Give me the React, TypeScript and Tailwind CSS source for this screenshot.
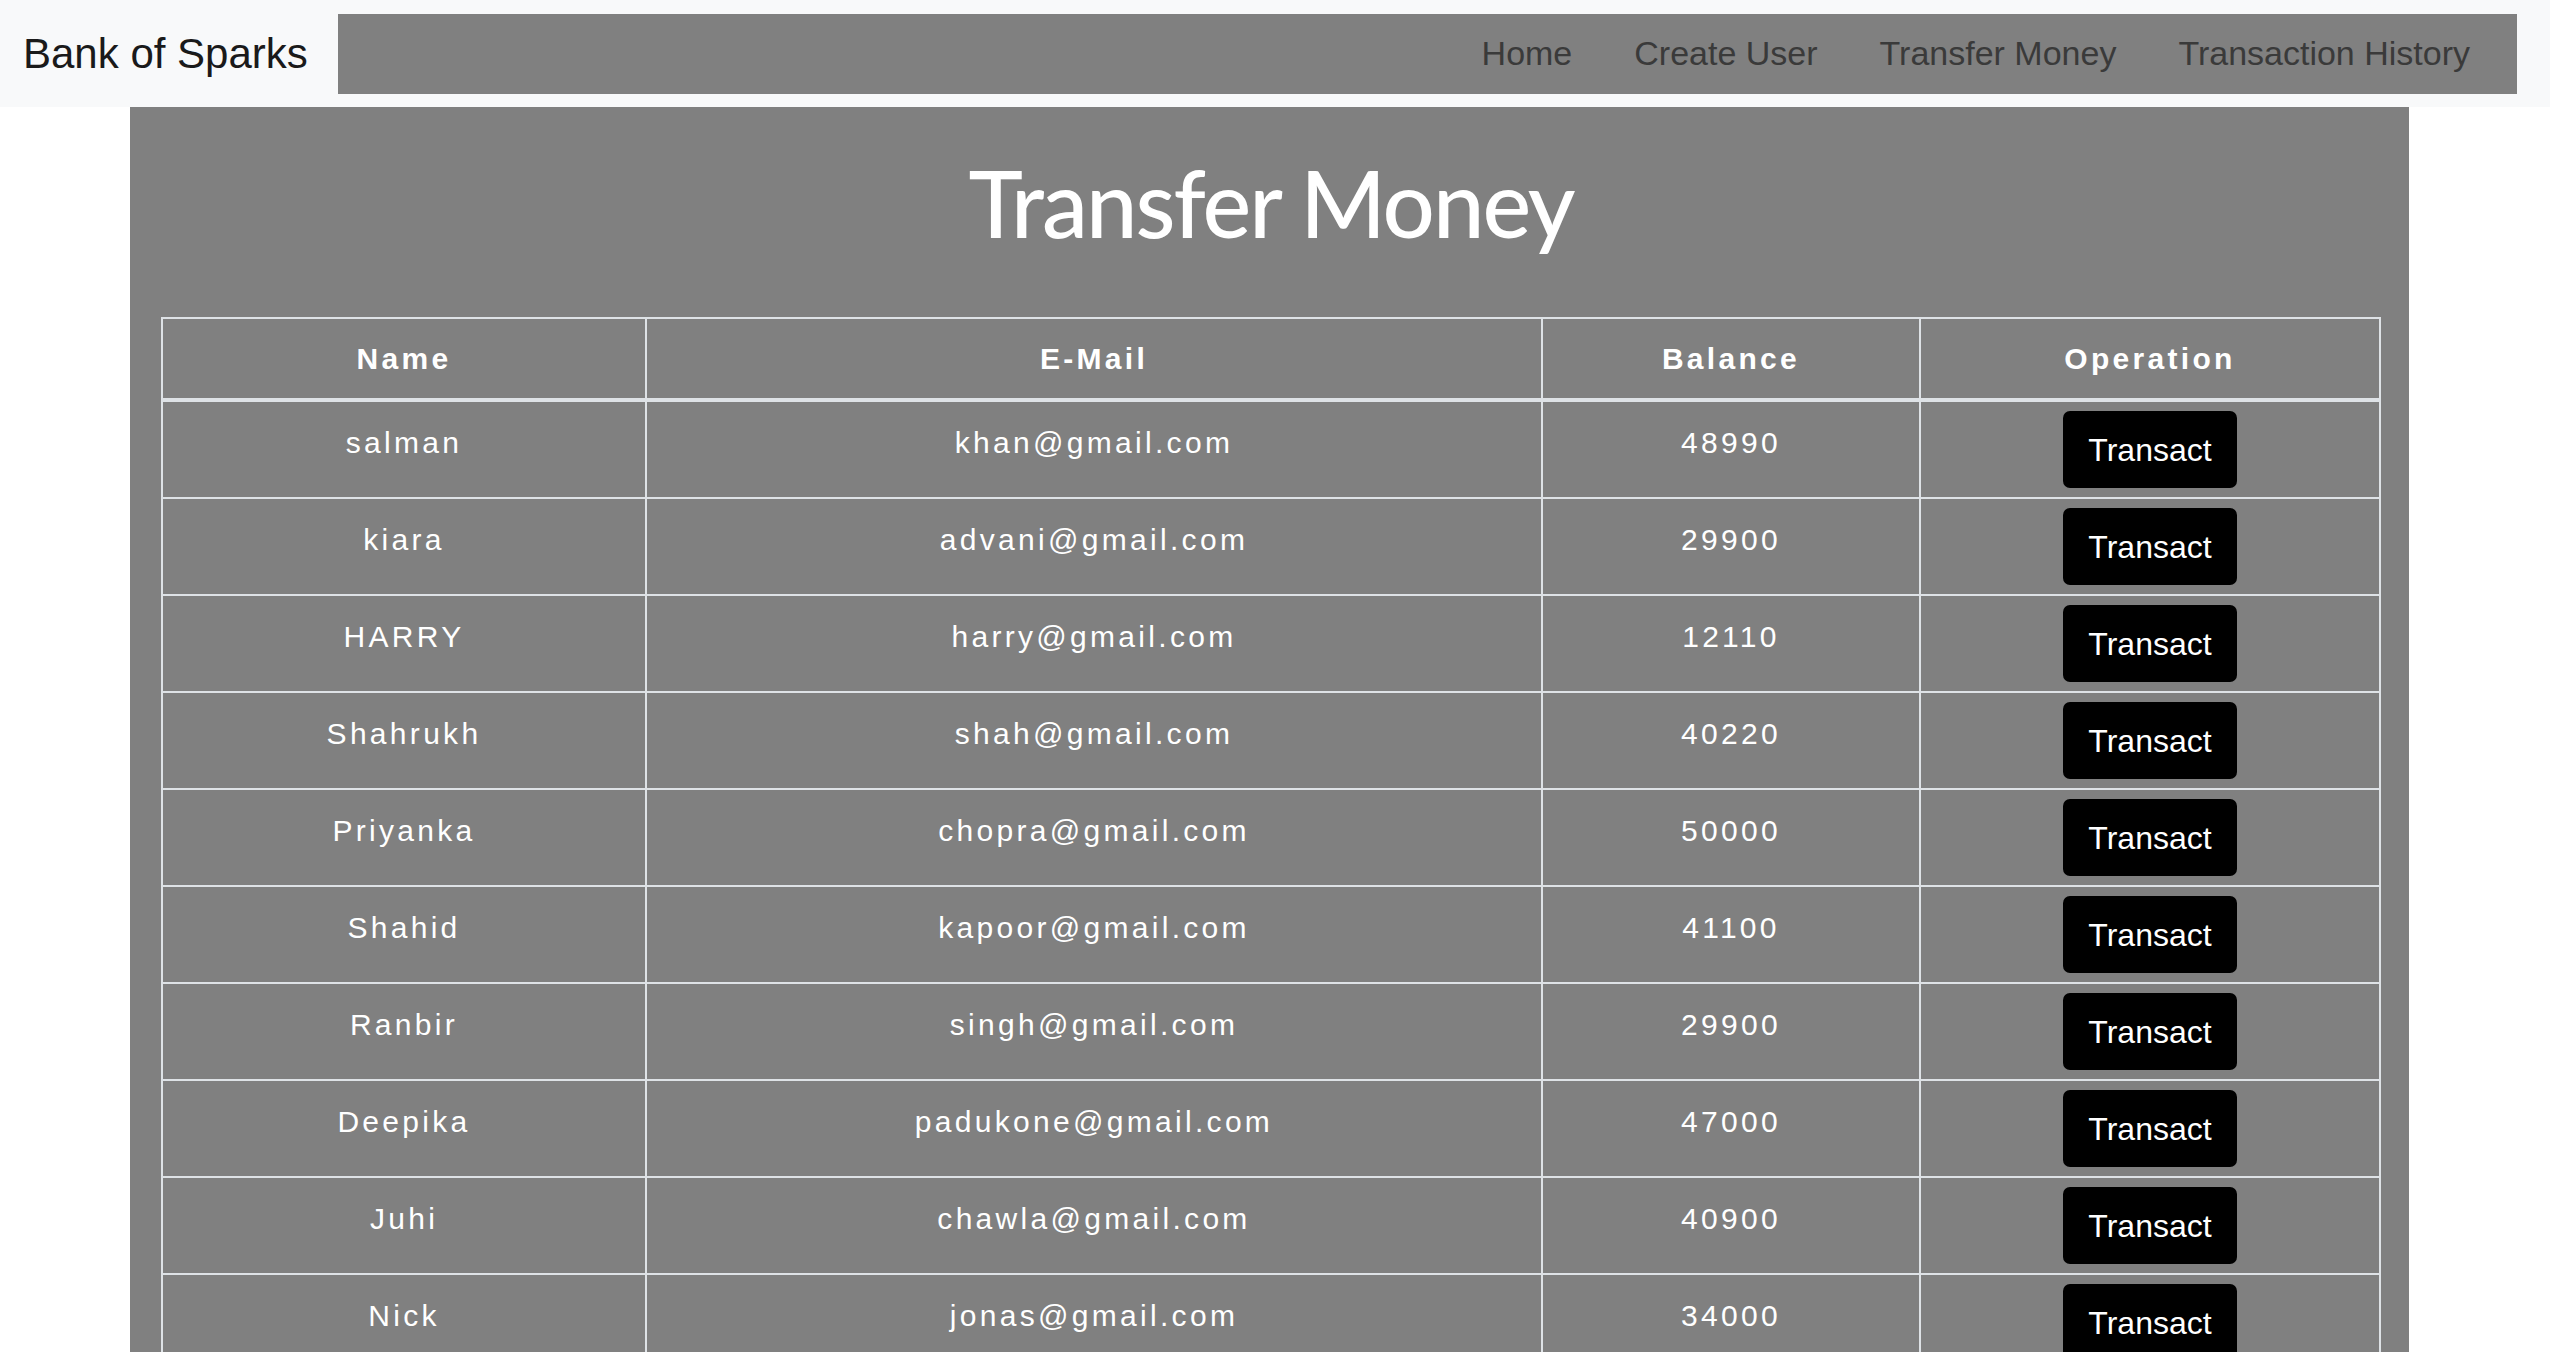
import React from "react";

const users = [
  { name: "salman", email: "khan@gmail.com", balance: 48990 },
  { name: "kiara", email: "advani@gmail.com", balance: 29900 },
  { name: "HARRY", email: "harry@gmail.com", balance: 12110 },
  { name: "Shahrukh", email: "shah@gmail.com", balance: 40220 },
  { name: "Priyanka", email: "chopra@gmail.com", balance: 50000 },
  { name: "Shahid", email: "kapoor@gmail.com", balance: 41100 },
  { name: "Ranbir", email: "singh@gmail.com", balance: 29900 },
  { name: "Deepika", email: "padukone@gmail.com", balance: 47000 },
  { name: "Juhi", email: "chawla@gmail.com", balance: 40900 },
  { name: "Nick", email: "jonas@gmail.com", balance: 34000 },
];

const links = ["Home", "Create User", "Transfer Money", "Transaction History"];

function Navbar() {
  return (
    <nav className="flex h-[107px] items-center bg-[#f8f9fa]">
      <a className="ml-[23px] w-[315px] text-[42px] text-[#1a1a1a]">Bank of Sparks</a>
      <div className="mr-[33px] flex h-[80px] flex-1 items-center justify-end bg-[#808080] pr-[47px]">
        <ul className="flex gap-[62px]">
          {links.map((l) => (
            <li key={l} className="text-[34px] text-[#3a3a3a]">
              {l}
            </li>
          ))}
        </ul>
      </div>
    </nav>
  );
}

function App() {
  return (
    <div className="min-h-screen bg-white font-['Liberation_Sans',Arial,sans-serif]">
      <Navbar />
      <div className="ml-[130px] mr-[141px] bg-[#808080] pb-[40px] pl-[31px] pr-[28px] pt-[41px]">
        <h1 className="mb-[59px] text-center font-['Lato',sans-serif] text-[92px] font-medium leading-[1.2] tracking-[-2px] text-white">
          Transfer Money
        </h1>
        <table className="w-full table-fixed border-collapse text-white">
          <colgroup>
            <col className="w-[484px]" />
            <col className="w-[896px]" />
            <col className="w-[378px]" />
            <col />
          </colgroup>
          <thead>
            <tr className="border-b-4 border-[#dee2e6]">
              {["Name", "E-Mail", "Balance", "Operation"].map((h) => (
                <th
                  key={h}
                  className="h-[82px] border-2 border-[#dee2e6] text-center text-[30px] font-bold tracking-[3.3px]"
                >
                  {h}
                </th>
              ))}
            </tr>
          </thead>
          <tbody>
            {users.map((u) => (
              <tr key={u.email}>
                <td className="border-2 border-[#dee2e6] pt-[12px] text-center align-top text-[30px] leading-[58px] tracking-[3.3px]">
                  {u.name}
                </td>
                <td className="border-2 border-[#dee2e6] pt-[12px] text-center align-top text-[30px] leading-[58px] tracking-[3.3px]">
                  {u.email}
                </td>
                <td className="border-2 border-[#dee2e6] pt-[12px] text-center align-top text-[30px] leading-[58px] tracking-[3.3px]">
                  {u.balance}
                </td>
                <td className="border-2 border-[#dee2e6] pb-[9px] pt-[9px] text-center align-top">
                  <button className="h-[77px] w-[174px] rounded-[7px] bg-black text-[32px] text-white">
                    Transact
                  </button>
                </td>
              </tr>
            ))}
          </tbody>
        </table>
      </div>
    </div>
  );
}

export default App;
